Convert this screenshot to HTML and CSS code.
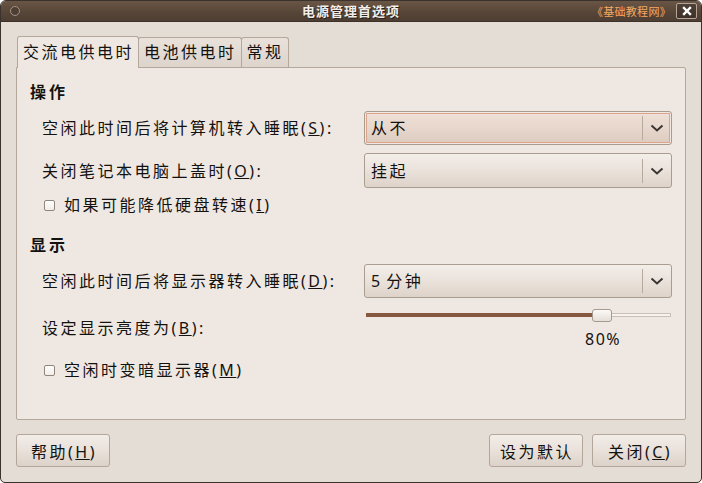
FILE: index.html
```html
<!DOCTYPE html>
<html>
<head>
<meta charset="utf-8">
<link rel="stylesheet" href="styles.css">
</head>
<body>

<div class="window">
    <div class="titlebar">
        <div class="tb-left">
            <svg class="tb-dot" width="12" height="12" viewBox="0 0 12 12">
                <circle cx="6" cy="6" r="4.5" fill="#4e3e34" stroke="#a39284" stroke-width="1"/>
            </svg>
        </div>
        <div class="tb-title">电源管理首选项</div>
        <div class="tb-right">
            <span class="tb-brand">《基础教程网》</span>
            <span class="tb-close">
                <svg width="10" height="10" viewBox="0 0 10 10">
                    <path d="M2 2 L8 8 M8 2 L2 8" stroke="#fff" stroke-width="2.4" stroke-linecap="square"/>
                </svg>
            </span>
        </div>
    </div>

    <div class="content">
        <div class="tabs">
            <div class="tab active">交流电供电时</div>
            <div class="tab">电池供电时</div>
            <div class="tab">常规</div>
        </div>

        <div class="panel">
            <div class="heading">操作</div>

            <div class="row row-first">
                <span class="label">空闲此时间后将计算机转入睡眠(<u>S</u>):</span>
                <div class="combo focused">
                    <span class="combo-text">从不</span>
                    <span class="combo-arrow">
                        <svg width="14" height="8" viewBox="0 0 14 8"><path d="M1.5 1.5 L7 6.5 L12.5 1.5" fill="none" stroke="#3a3633" stroke-width="2"/></svg>
                    </span>
                </div>
            </div>

            <div class="row">
                <span class="label">关闭笔记本电脑上盖时(<u>O</u>):</span>
                <div class="combo tall">
                    <span class="combo-text">挂起</span>
                    <span class="combo-arrow">
                        <svg width="14" height="8" viewBox="0 0 14 8"><path d="M1.5 1.5 L7 6.5 L12.5 1.5" fill="none" stroke="#3a3633" stroke-width="2"/></svg>
                    </span>
                </div>
            </div>

            <div class="check-row">
                <span class="checkbox"></span>
                <span class="label">如果可能降低硬盘转速(<u>I</u>)</span>
            </div>

            <div class="heading heading-second">显示</div>

            <div class="row row-first">
                <span class="label">空闲此时间后将显示器转入睡眠(<u>D</u>):</span>
                <div class="combo">
                    <span class="combo-text"><span class="num">5 </span>分钟</span>
                    <span class="combo-arrow">
                        <svg width="14" height="8" viewBox="0 0 14 8"><path d="M1.5 1.5 L7 6.5 L12.5 1.5" fill="none" stroke="#3a3633" stroke-width="2"/></svg>
                    </span>
                </div>
            </div>

            <div class="row">
                <span class="label">设定显示亮度为(<u>B</u>):</span>
                <div class="slider-box">
                    <div class="slider">
                        <div class="trough">
                            <div class="trough-fill" style="width: 226px"></div>
                        </div>
                        <div class="handle"></div>
                    </div>
                    <div class="slider-value">80%</div>
                </div>
            </div>

            <div class="check-row check-last">
                <span class="checkbox"></span>
                <span class="label">空闲时变暗显示器(<u>M</u>)</span>
            </div>
        </div>

        <div class="buttons">
            <button class="btn">帮助(<u>H</u>)</button>
            <div class="spacer"></div>
            <button class="btn">设为默认</button>
            <button class="btn">关闭(<u>C</u>)</button>
        </div>
    </div>
</div>

</body>
</html>
```

FILE: styles.css
```css
body {
    margin: 0;
    background-color: #ffffff;
    font-family: "Noto Sans", "Noto Sans CJK SC", sans-serif;
    font-size: 16px;
    color: #141210;
}

.window {
    width: 702px;
    height: 483px;
    box-sizing: border-box;
    border: 1px solid #3a322c;
    border-radius: 6px 6px 5px 5px;
    background-color: #e4ddd6;
    overflow: hidden;
}

/* title bar */
.titlebar {
    height: 21px;
    display: grid;
    grid-template-columns: 1fr auto 1fr;
    align-items: center;
    background: linear-gradient(#6a5545, #564537 60%, #4d3e33);
    border-bottom: 1px solid #3d3129;
    box-sizing: border-box;
}

.tb-left {
    display: flex;
    align-items: center;
    padding-left: 8px;
}

.tb-dot {
    display: block;
}

.tb-title {
    font-family: "Noto Sans CJK SC", sans-serif;
    font-size: 13px;
    font-weight: bold;
    letter-spacing: 1px;
    color: #f2ede8;
    text-shadow: 1px 1px 0 #2a211b;
    line-height: 20px;
}

.tb-right {
    display: flex;
    align-items: center;
    justify-content: flex-end;
    padding-right: 4px;
}

.tb-brand {
    font-family: "Noto Sans CJK SC", sans-serif;
    font-size: 11px;
    letter-spacing: 0.3px;
    color: #f7a862;
    margin-right: 5px;
    line-height: 16px;
}

.tb-close {
    width: 19px;
    height: 14px;
    border: 1px solid #b3a598;
    border-radius: 2px;
    background: linear-gradient(#4f4036, #3d3129);
    display: flex;
    align-items: center;
    justify-content: center;
}

.tb-close svg {
    display: block;
}

/* body */
.content {
    padding: 14px 15px 0 15px;
}

.tabs {
    display: flex;
    align-items: flex-end;
    padding-left: 1px;
    height: 31px;
}

.tab {
    height: 30px;
    box-sizing: border-box;
    padding: 0 4px 0 5px;
    border: 1px solid #b4a89d;
    border-bottom: none;
    border-radius: 3px 3px 0 0;
    background: linear-gradient(#e9e2db, #ddd4cc);
    letter-spacing: 2.5px;
    line-height: 28px;
    margin-right: -1px;
}

.tab.active {
    height: 32px;
    margin-bottom: -1px;
    background: #efe8e2;
    position: relative;
    z-index: 1;
    line-height: 30px;
}

.panel {
    height: 353px;
    box-sizing: border-box;
    border: 1px solid #b4a89d;
    border-radius: 0 2px 2px 2px;
    background-color: #efe8e2;
    padding: 14px 13px 0 13px;
}

.label {
    letter-spacing: 2.5px;
    line-height: 20px;
    white-space: nowrap;
}

.heading {
    font-weight: bold;
    letter-spacing: 3px;
    line-height: 20px;
}

.heading-second {
    margin-top: 20px;
}

.row {
    display: flex;
    align-items: center;
    justify-content: space-between;
    margin-left: 12px;
    margin-top: 8px;
}

.row-first {
    margin-top: 9px;
}

/* combo boxes */
.combo {
    width: 308px;
    height: 34px;
    box-sizing: border-box;
    border: 1px solid #a99d92;
    border-radius: 3px;
    background: linear-gradient(#f4eee9, #ebe3dc 45%, #ded3c9);
    display: flex;
    align-items: center;
}

.combo.tall {
    height: 35px;
}

.combo.focused {
    background: linear-gradient(#efe1d8, #e8d8cd 45%, #dccabe);
    box-shadow: inset 0 0 0 1px #f3e8e1, inset 0 0 0 2px #d9a58c;
}

.combo-text {
    flex: 1;
    padding-left: 6px;
    letter-spacing: 2.5px;
    line-height: 20px;
}

.combo-text .num {
    letter-spacing: 1px;
}

.combo-arrow {
    width: 28px;
    height: 24px;
    border-left: 1px solid #b6aa9f;
    display: flex;
    align-items: center;
    justify-content: center;
}

.combo-arrow svg {
    display: block;
}

/* checkboxes */
.check-row {
    display: flex;
    align-items: center;
    margin-left: 14px;
    margin-top: 7px;
    height: 20px;
}

.check-last {
    margin-top: 11px;
}

.checkbox {
    width: 11px;
    height: 11px;
    box-sizing: border-box;
    border: 1px solid #8f857c;
    border-radius: 2px;
    background: linear-gradient(#ffffff, #f1ede9);
    margin-right: 9px;
}

/* brightness slider */
.slider-box {
    width: 308px;
    height: 43px;
}

.slider {
    height: 16px;
    position: relative;
    margin: 0 1px 0 2px;
}

.trough {
    position: absolute;
    top: 7px;
    left: 0;
    right: 0;
    height: 4px;
    box-sizing: border-box;
    border: 1px solid #c9bfb6;
    background-color: #f6f2ee;
}

.trough-fill {
    height: 4px;
    margin: -1px 0 0 -1px;
    background-color: #85583f;
}

.handle {
    position: absolute;
    top: 3px;
    left: 226px;
    width: 20px;
    height: 13px;
    box-sizing: border-box;
    border: 1px solid #a59a90;
    border-radius: 3px;
    background: linear-gradient(#fbf9f7, #e6dfd8);
}

.slider-value {
    margin-top: 7px;
    padding-left: 221px;
    letter-spacing: 1.5px;
    line-height: 20px;
}

/* bottom buttons */
.buttons {
    display: flex;
    align-items: center;
    margin-top: 14px;
    gap: 9px;
}

.spacer {
    flex: 1;
}

.btn {
    width: 94px;
    height: 33px;
    border: 1px solid #b3a79c;
    border-radius: 3px;
    background: linear-gradient(#f3ede8, #e9e1da 50%, #dcd2c9);
    font-family: "Noto Sans", "Noto Sans CJK SC", sans-serif;
    font-size: 16px;
    letter-spacing: 2.5px;
    color: #141210;
    padding: 0 0 0 2px;
}
```
